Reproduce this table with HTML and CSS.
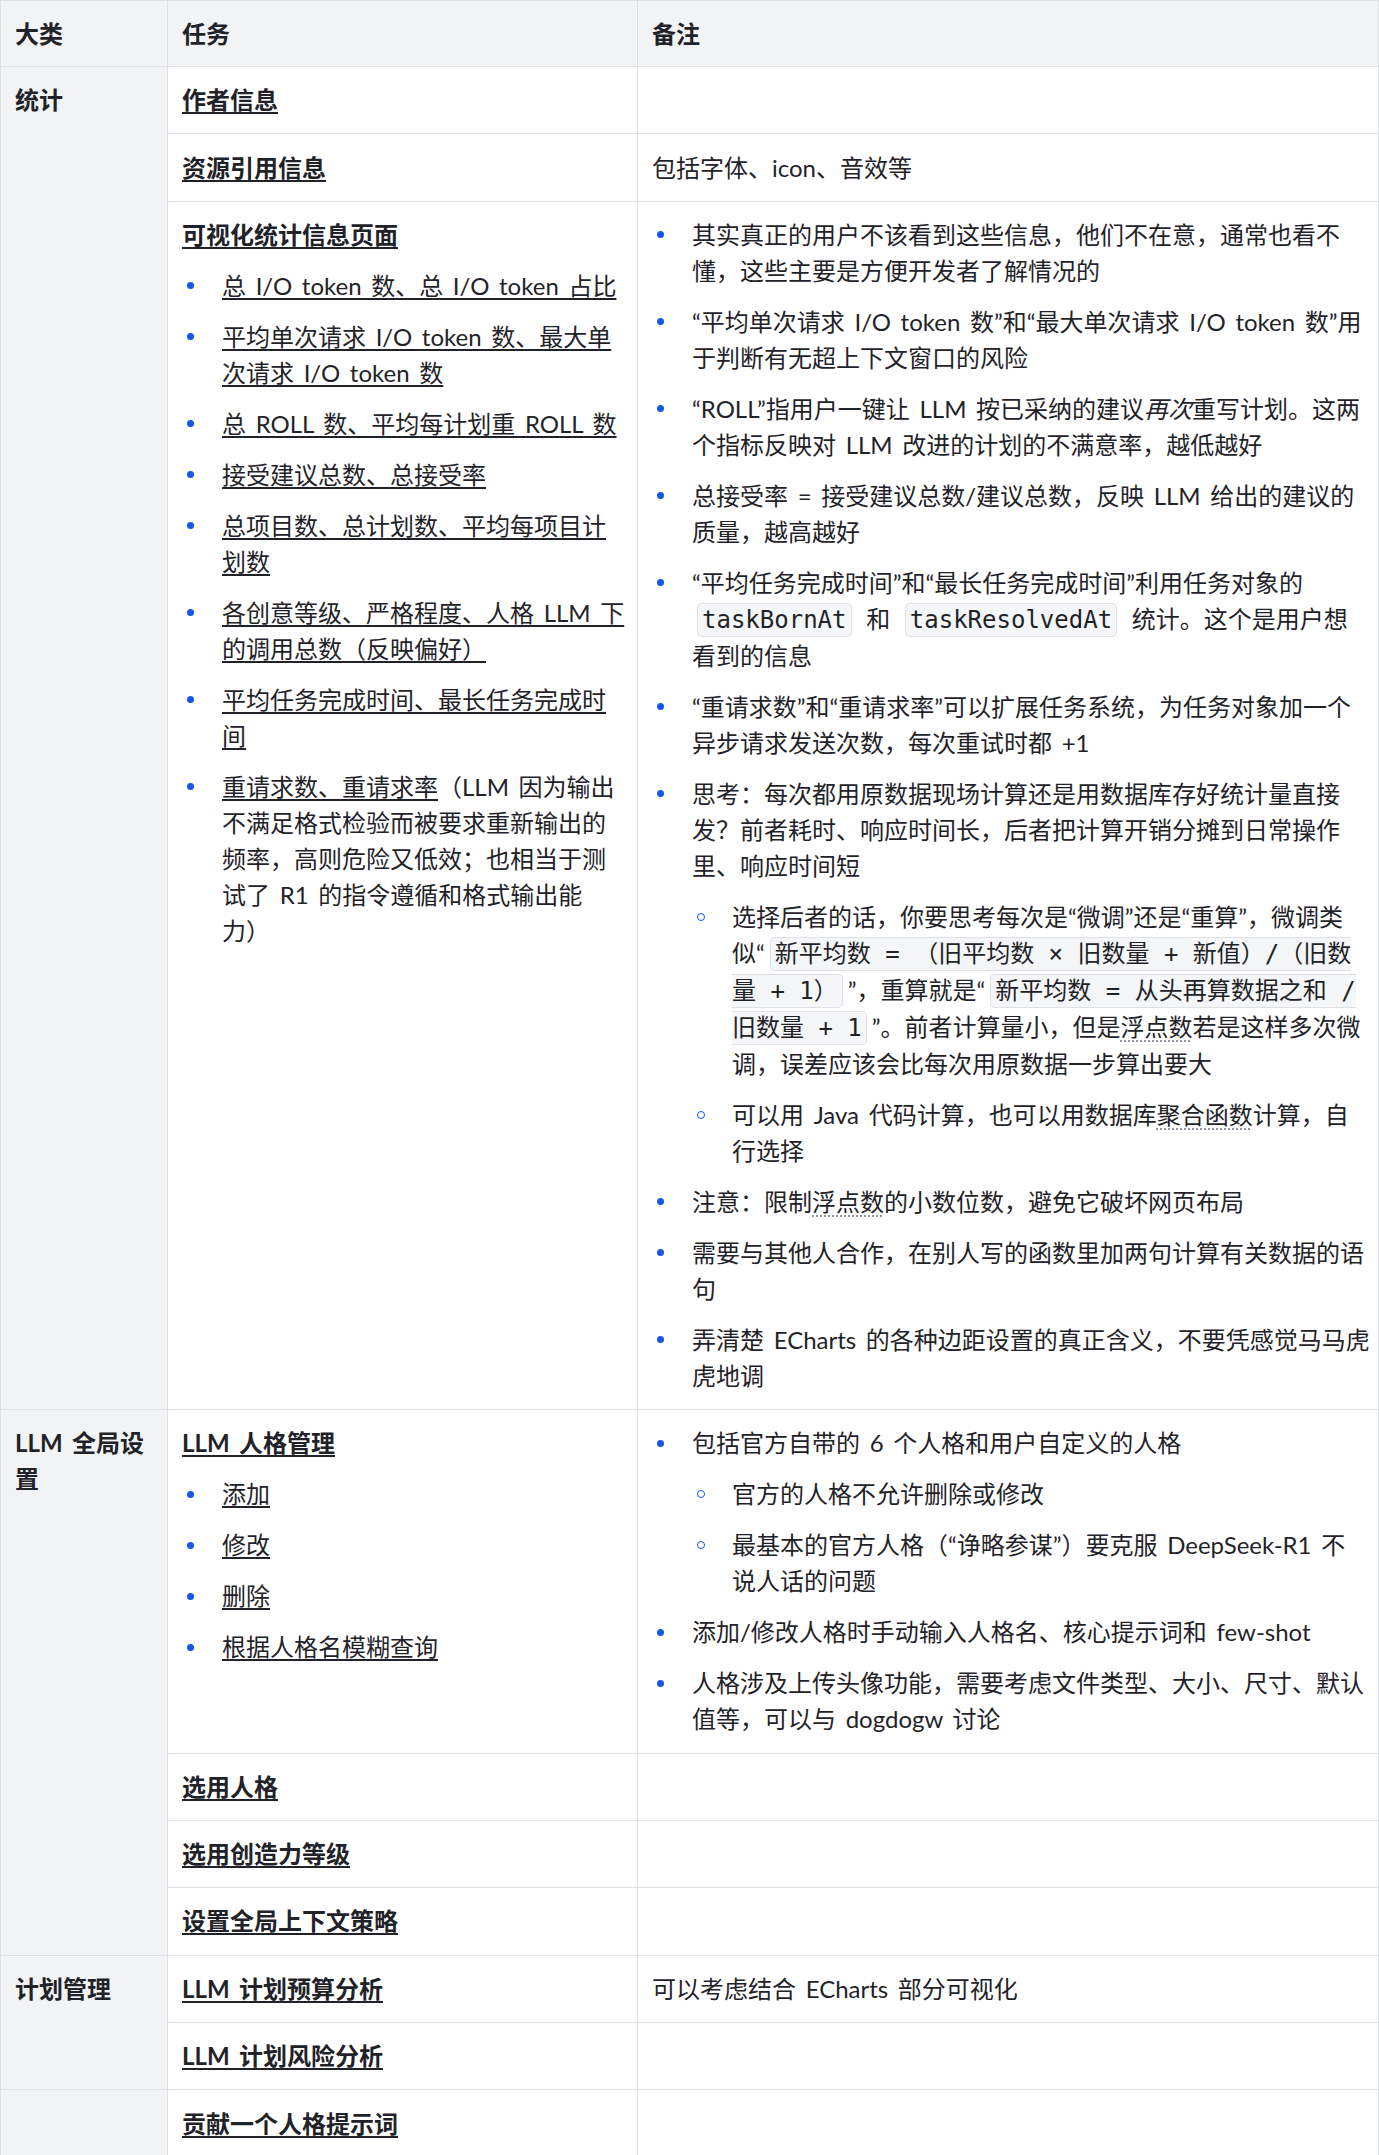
FILE: index.html
```html
<!DOCTYPE html>
<html lang="zh-CN">
<head>
<meta charset="utf-8">
<title>任务表</title>
<link rel="stylesheet" href="styles.css">
</head>
<body>
<table class="doc-table">
  <thead>
    <tr>
      <th class="col-cat">大类</th>
      <th class="col-task">任务</th>
      <th class="col-note">备注</th>
    </tr>
  </thead>
  <tbody>
    <tr>
      <td class="cat" rowspan="3">统计</td>
      <td class="task"><a class="title" href="#">作者信息</a></td>
      <td class="note"></td>
    </tr>
    <tr>
      <td class="task"><a class="title" href="#">资源引用信息</a></td>
      <td class="note">包括字体、icon、音效等</td>
    </tr>
    <tr>
      <td class="task">
        <div><a class="title" href="#">可视化统计信息页面</a></div>
        <ul class="list">
          <li><a href="#">总 I/O token 数、总 I/O token 占比</a></li>
          <li><a href="#">平均单次请求 I/O token 数、最大单次请求 I/O token 数</a></li>
          <li><a href="#">总 ROLL 数、平均每计划重 ROLL 数</a></li>
          <li><a href="#">接受建议总数、总接受率</a></li>
          <li><a href="#">总项目数、总计划数、平均每项目计划数</a></li>
          <li><a href="#">各创意等级、严格程度、人格 LLM 下的调用总数（反映偏好）</a></li>
          <li><a href="#">平均任务完成时间、最长任务完成时间</a></li>
          <li><a href="#">重请求数、重请求率</a>（LLM 因为输出不满足格式检验而被要求重新输出的频率，高则危险又低效；也相当于测试了 R1 的指令遵循和格式输出能力）</li>
        </ul>
      </td>
      <td class="note">
        <ul class="list top">
          <li>其实真正的用户不该看到这些信息，他们不在意，通常也看不懂，这些主要是方便开发者了解情况的</li>
          <li>“平均单次请求 I/O token 数”和“最大单次请求 I/O token 数”用于判断有无超上下文窗口的风险</li>
          <li>“ROLL”指用户一键让 LLM 按已采纳的建议<em>再次</em>重写计划。这两个指标反映对 LLM 改进的计划的不满意率，越低越好</li>
          <li>总接受率 = 接受建议总数/建议总数，反映 LLM 给出的建议的质量，越高越好</li>
          <li>“平均任务完成时间”和“最长任务完成时间”利用任务对象的 <code>taskBornAt</code> 和 <code>taskResolvedAt</code> 统计。这个是用户想看到的信息</li>
          <li>“重请求数”和“重请求率”可以扩展任务系统，为任务对象加一个异步请求发送次数，每次重试时都 +1</li>
          <li>思考：每次都用原数据现场计算还是用数据库存好统计量直接发？前者耗时、响应时间长，后者把计算开销分摊到日常操作里、响应时间短
            <ul class="list sub">
              <li>选择后者的话，你要思考每次是“微调”还是“重算”，微调类似“<code>新平均数 = （旧平均数 × 旧数量 + 新值）/（旧数量 + 1）</code>”，重算就是“<code>新平均数 = 从头再算数据之和 / 旧数量 + 1</code>”。前者计算量小，但是<span class="remark">浮点数</span>若是这样多次微调，误差应该会比每次用原数据一步算出要大</li>
              <li>可以用 Java 代码计算，也可以用数据库<span class="remark">聚合函数</span>计算，自行选择</li>
            </ul>
          </li>
          <li>注意：限制<span class="remark">浮点数</span>的小数位数，避免它破坏网页布局</li>
          <li>需要与其他人合作，在别人写的函数里加两句计算有关数据的语句</li>
          <li>弄清楚 ECharts 的各种边距设置的真正含义，不要凭感觉马马虎虎地调</li>
        </ul>
      </td>
    </tr>
    <tr>
      <td class="cat" rowspan="4">LLM 全局设置</td>
      <td class="task">
        <div><a class="title" href="#">LLM 人格管理</a></div>
        <ul class="list">
          <li><a href="#">添加</a></li>
          <li><a href="#">修改</a></li>
          <li><a href="#">删除</a></li>
          <li><a href="#">根据人格名模糊查询</a></li>
        </ul>
      </td>
      <td class="note">
        <ul class="list top">
          <li>包括官方自带的 6 个人格和用户自定义的人格
            <ul class="list sub">
              <li>官方的人格不允许删除或修改</li>
              <li>最基本的官方人格（“诤略参谋”）要克服 DeepSeek-R1 不说人话的问题</li>
            </ul>
          </li>
          <li>添加/修改人格时手动输入人格名、核心提示词和 few-shot</li>
          <li>人格涉及上传头像功能，需要考虑文件类型、大小、尺寸、默认值等，可以与 dogdogw 讨论</li>
        </ul>
      </td>
    </tr>
    <tr>
      <td class="task"><a class="title" href="#">选用人格</a></td>
      <td class="note"></td>
    </tr>
    <tr>
      <td class="task"><a class="title" href="#">选用创造力等级</a></td>
      <td class="note"></td>
    </tr>
    <tr>
      <td class="task"><a class="title" href="#">设置全局上下文策略</a></td>
      <td class="note"></td>
    </tr>
    <tr>
      <td class="cat" rowspan="2">计划管理</td>
      <td class="task"><a class="title" href="#">LLM 计划预算分析</a></td>
      <td class="note">可以考虑结合 ECharts 部分可视化</td>
    </tr>
    <tr>
      <td class="task"><a class="title" href="#">LLM 计划风险分析</a></td>
      <td class="note"></td>
    </tr>
    <tr>
      <td class="cat"></td>
      <td class="task"><a class="title" href="#">贡献一个人格提示词</a></td>
      <td class="note"></td>
    </tr>
  </tbody>
</table>
</body>
</html>
```

FILE: styles.css
```css
html, body {
  margin: 0;
  padding: 0;
  background: #ffffff;
}

body {
  font-family: "Lato", "Noto Sans CJK SC", sans-serif;
  font-size: 24px;
  line-height: 36px;
  color: #1f2329;
  word-spacing: 3.5px;
  text-spacing-trim: space-all;
}

.doc-table {
  width: 1379px;
  table-layout: fixed;
  border-collapse: separate;
  border-spacing: 0;
  border-top: 1px solid #dee0e3;
  border-left: 1px solid #dee0e3;
}

.doc-table th,
.doc-table td {
  box-sizing: border-box;
  border-right: 1px solid #dee0e3;
  border-bottom: 1px solid #dee0e3;
  padding: 15.2px 13px 15.2px 14px;
  vertical-align: top;
  text-align: left;
}

.doc-table td.task {
  padding-right: 10.6px;
}

.doc-table td.note {
  padding-right: 8px;
}

.doc-table thead th {
  background: #f2f3f5;
  font-weight: 700;
  padding-top: 14.5px;
  padding-bottom: 14.5px;
}

.col-cat { width: 167px; }
.col-task { width: 470px; }
.col-note { width: 741px; }

.doc-table td.cat {
  background: #f2f3f5;
  font-weight: 700;
}

a {
  color: inherit;
  text-decoration: underline;
  text-decoration-thickness: 2px;
  text-underline-offset: 3px;
}

a.title {
  font-weight: 700;
}

.list {
  list-style: none;
  margin: 0;
  padding: 0 0 0 40px;
}

.list.sub {
  margin-right: 5px;
}

.list li {
  position: relative;
}

.list li + li,
div + .list > li:first-child,
.list.sub > li:first-child {
  margin-top: 15px;
}

.list li::before {
  content: "";
  position: absolute;
  left: -35.5px;
  top: 14.5px;
  width: 7px;
  height: 7px;
  border-radius: 50%;
  background: #1456f0;
}

.list.sub > li::before {
  box-sizing: border-box;
  left: -35px;
  top: 14px;
  width: 8px;
  height: 8px;
  background: transparent;
  border: 1.5px solid #1456f0;
}

code {
  font-family: "DejaVu Sans Mono", "Noto Sans CJK SC", monospace;
  font-size: 24px;
  word-spacing: 0;
  background: #f5f6f7;
  border: 1px solid #dee0e3;
  border-radius: 5px;
  padding: 2px 4px;
  margin: 0 5px;
}

.remark {
  text-decoration: underline dotted #8f959e;
  text-decoration-thickness: 1.5px;
  text-underline-offset: 5px;
}
```
